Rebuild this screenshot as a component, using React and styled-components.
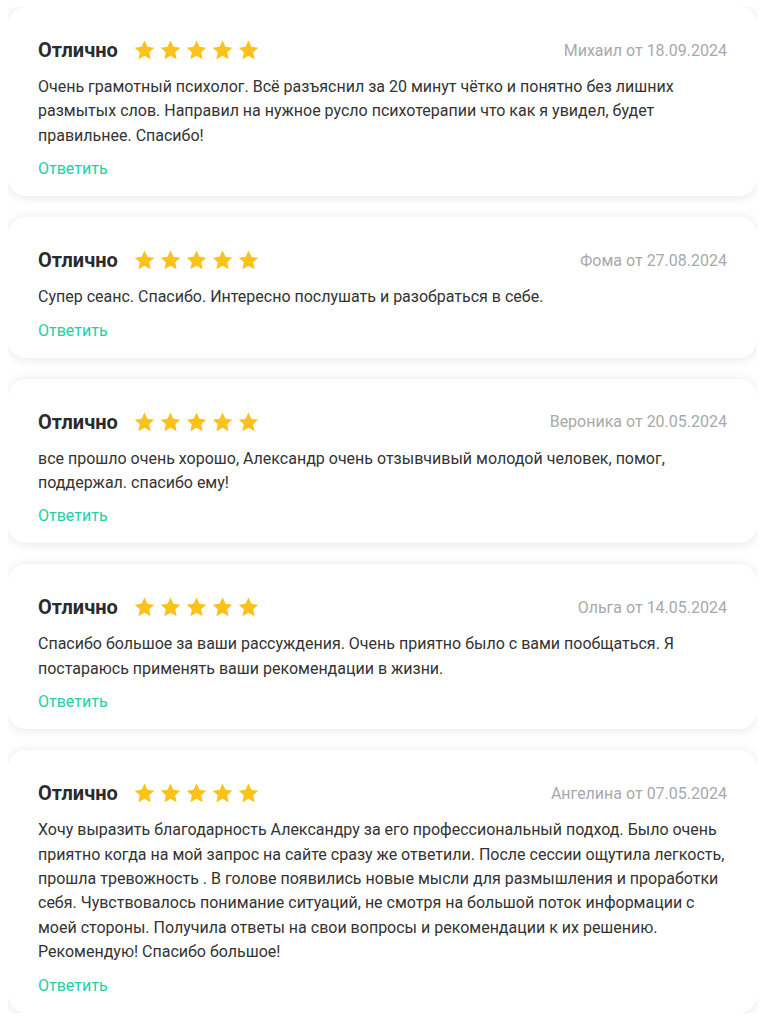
import React from "react";
import styled, { createGlobalStyle } from "styled-components";

const GlobalStyle = createGlobalStyle`
  body {
    margin: 7px 8px 8px;
    background: #ffffff;
    font-family: Roboto, "Noto Sans", sans-serif;
    color: #2b2b2b;
  }
`;

const reviews = [
  {
    author: "Михаил",
    date: "18.09.2024",
    text: "Очень грамотный психолог. Всё разъяснил за 20 минут чётко и понятно без лишних размытых слов. Направил на нужное русло психотерапии что как я увидел, будет правильнее. Спасибо!",
  },
  {
    author: "Фома",
    date: "27.08.2024",
    text: "Супер сеанс. Спасибо. Интересно послушать и разобраться в себе.",
  },
  {
    author: "Вероника",
    date: "20.05.2024",
    text: "все прошло очень хорошо, Александр очень отзывчивый молодой человек, помог, поддержал. спасибо ему!",
  },
  {
    author: "Ольга",
    date: "14.05.2024",
    text: "Спасибо большое за ваши рассуждения. Очень приятно было с вами пообщаться. Я постараюсь применять ваши рекомендации в жизни.",
  },
  {
    author: "Ангелина",
    date: "07.05.2024",
    text: "Хочу выразить благодарность Александру за его профессиональный подход. Было очень приятно когда на мой запрос на сайте сразу же ответили. После сессии ощутила легкость, прошла тревожность . В голове появились новые мысли для размышления и проработки себя. Чувствовалось понимание ситуаций, не смотря на большой поток информации с моей стороны. Получила ответы на свои вопросы и рекомендации к их решению. Рекомендую! Спасибо большое!",
  },
];

const List = styled.div`
  display: flex;
  flex-direction: column;
  gap: 21px;
`;

const Card = styled.div`
  background: #fff;
  border-radius: 18px;
  box-shadow: 0 1px 12px rgba(0, 0, 0, 0.1);
  padding: 31px 30px 15px;
`;

const Header = styled.div`
  display: flex;
  align-items: center;
  height: 24px;
`;

const Title = styled.div`
  font-size: 20px;
  font-weight: 700;
  color: #2b2b2b;
  margin-right: 16px;
`;

const Stars = styled.div`
  display: flex;
  gap: 5px;
`;

const Meta = styled.div`
  margin-left: auto;
  font-size: 16px;
  color: #a8a9ab;
`;

const Text = styled.p`
  margin: 13px 0 9px;
  font-size: 16px;
  line-height: 24.4px;
  color: #333;
`;

const Reply = styled.a`
  display: inline-block;
  font-size: 16px;
  line-height: 24px;
  color: #22cfa6;
  text-decoration: none;
  cursor: pointer;
`;

function Star() {
  return (
    <svg width="21" height="20" viewBox="0 0 24 23">
      <path
        d="M12 0.6l3.4 7.3 7.9 0.9-5.9 5.4 1.6 7.9L12 18.1 5 22.1l1.6-7.9L0.7 8.8l7.9-0.9z"
        fill="#fbc21c"
      />
    </svg>
  );
}

function Review({ author, date, text }) {
  return (
    <Card>
      <Header>
        <Title>Отлично</Title>
        <Stars>
          {[0, 1, 2, 3, 4].map((i) => (
            <Star key={i} />
          ))}
        </Stars>
        <Meta>
          {author} от {date}
        </Meta>
      </Header>
      <Text>{text}</Text>
      <Reply>Ответить</Reply>
    </Card>
  );
}

export default function App() {
  return (
    <>
      <GlobalStyle />
      <List>
        {reviews.map((r) => (
          <Review key={r.author} {...r} />
        ))}
      </List>
    </>
  );
}
